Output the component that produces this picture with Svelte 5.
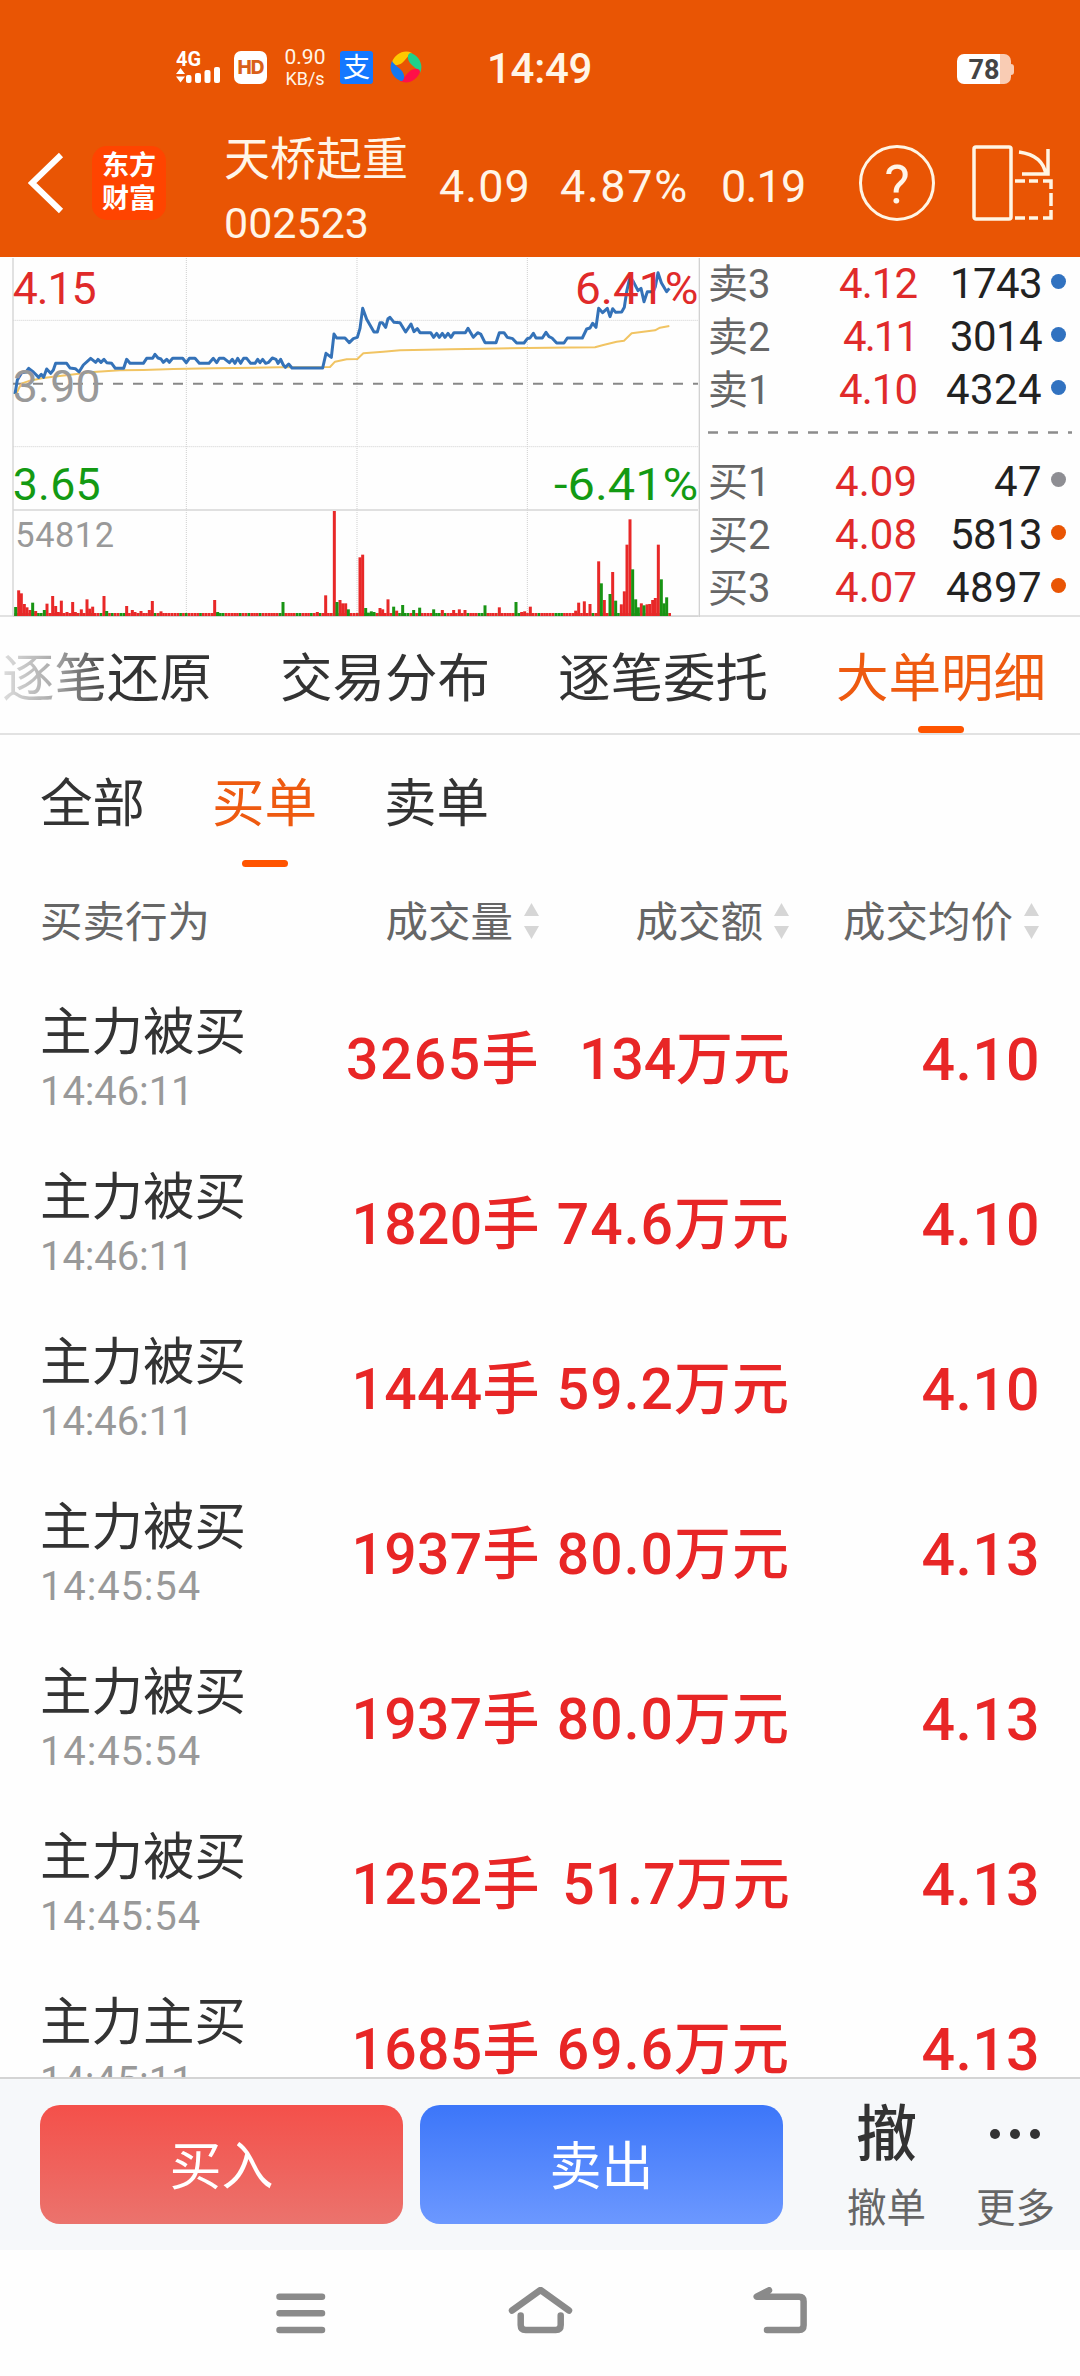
<script>
  // prices of the day, as chart points (three units to a pixel)
  const priceLine = '45,432 52,390 65,368 78,366 86,355 100,366 116,382 124,373 131,382 140,357 152,370 160,360 167,340 200,340 210,354 226,356 237,366 250,345 272,325 287,337 294,328 303,337 312,328 320,338 335,340 346,355 371,355 380,328 390,340 430,340 440,325 458,325 465,313 474,324 483,327 490,337 500,328 508,337 518,325 548,325 559,338 568,325 585,325 598,340 627,340 640,325 650,338 658,325 672,325 688,338 697,328 705,340 713,325 722,340 731,325 740,325 752,340 765,340 773,328 780,338 788,328 797,340 806,337 817,324 828,328 834,340 842,328 850,345 856,352 866,342 876,354 968,354 978,310 994,322 1002,252 1010,264 1035,264 1048,278 1060,266 1072,262 1080,235 1088,175 1100,208 1122,246 1132,246 1140,218 1147,218 1157,232 1164,206 1170,202 1182,217 1200,218 1217,246 1233,222 1242,245 1252,236 1260,248 1292,248 1301,262 1310,250 1318,262 1327,250 1335,262 1344,250 1353,262 1362,248 1396,248 1404,235 1420,262 1433,248 1442,252 1455,278 1488,278 1498,248 1512,248 1522,262 1538,266 1550,279 1572,279 1582,266 1590,264 1600,250 1608,264 1627,264 1638,247 1647,260 1656,264 1670,279 1692,279 1702,264 1747,264 1760,237 1770,234 1778,220 1788,232 1796,175 1808,188 1822,175 1830,200 1838,176 1847,187 1865,186 1873,172 1880,125 1890,80 1900,95 1914,122 1923,115 1932,155 1942,125 1960,125 1966,110 1974,68 1984,98 2000,125 2008,115';
  const averageLine = '50,430 58,412 66,400 90,392 125,385 160,380 230,372 280,366 360,361 430,360 520,357 640,355 840,352 990,351 1005,335 1040,328 1072,327 1090,310 1150,305 1200,301 1280,299 1350,298 1450,296 1580,294 1785,292 1810,285 1850,275 1872,272 1895,250 1930,245 1965,241 1980,233 2008,228';

  // x, height; buys are red, sells are green
  const buys = [
    [56, 77], [64, 68], [73, 36], [81, 26], [90, 18], [107, 15], [141, 37], [158, 60], [167, 30], [175, 12],
    [184, 46], [201, 12], [218, 42], [226, 12], [244, 20], [261, 50], [269, 22], [278, 28], [312, 60],
    [380, 30], [397, 18], [405, 12], [423, 15], [448, 18], [457, 45], [483, 14], [644, 48], [952, 12],
    [977, 62], [1003, 315], [1020, 48], [1028, 38], [1037, 38], [1080, 176], [1088, 184], [1140, 24],
    [1148, 20], [1164, 50], [1190, 16], [1327, 18], [1361, 18], [1378, 20], [1395, 18], [1498, 26],
    [1565, 12], [1574, 14], [1591, 28], [1727, 16], [1736, 40], [1753, 44], [1770, 36], [1796, 164],
    [1813, 48], [1838, 132], [1864, 35], [1873, 74], [1881, 214], [1890, 290], [1924, 38], [1941, 35],
    [1949, 36], [1958, 48], [1966, 54], [1975, 214]
  ];
  const sells = [
    [47, 27], [98, 40], [133, 18], [320, 15], [653, 12], [849, 42], [1011, 42], [1045, 20], [1097, 24],
    [1105, 10], [1114, 14], [1122, 12], [1181, 28], [1208, 33], [1241, 18], [1259, 25], [1301, 20],
    [1455, 32], [1548, 42], [1804, 98], [1830, 66], [1847, 46], [1898, 140], [1907, 50], [1915, 26],
    [1932, 32], [1984, 110], [1992, 38], [2000, 56]
  ];
  // quiet minutes still get a short bar
  const quiet = Array.from({ length: 231 }, (_, i) => ({
    x: 47 + i * 8.53,
    sell: i % 7 === 2 || i % 11 === 5 || i % 13 === 8
  }));

  const asks = [
    { label: '卖3', price: '4.12', volume: '1743', dot: 'blue' },
    { label: '卖2', price: '4.11', volume: '3014', dot: 'blue' },
    { label: '卖1', price: '4.10', volume: '4324', dot: 'blue' }
  ];
  const bids = [
    { label: '买1', price: '4.09', volume: '47', dot: 'gray' },
    { label: '买2', price: '4.08', volume: '5813', dot: 'orange' },
    { label: '买3', price: '4.07', volume: '4897', dot: 'orange' }
  ];

  const tabs = ['逐笔还原', '交易分布', '逐笔委托', '大单明细'];
  let activeTab = '大单明细';
  const filters = ['全部', '买单', '卖单'];
  let activeFilter = '买单';

  const orders = [
    { type: '主力被买', time: '14:46:11', volume: '3265手', amount: '134万元', price: '4.10' },
    { type: '主力被买', time: '14:46:11', volume: '1820手', amount: '74.6万元', price: '4.10' },
    { type: '主力被买', time: '14:46:11', volume: '1444手', amount: '59.2万元', price: '4.10' },
    { type: '主力被买', time: '14:45:54', volume: '1937手', amount: '80.0万元', price: '4.13' },
    { type: '主力被买', time: '14:45:54', volume: '1937手', amount: '80.0万元', price: '4.13' },
    { type: '主力被买', time: '14:45:54', volume: '1252手', amount: '51.7万元', price: '4.13' },
    { type: '主力主买', time: '14:45:11', volume: '1685手', amount: '69.6万元', price: '4.13' }
  ];

  // the digit 1 is narrow, so tighten texts by how many they have
  const tight = (text, extra = 0) => {
    const ones = text.split('1').length - 1;
    return `${(extra - 0.095 * ones / text.length).toFixed(4)}em`;
  };
</script>

<div class="screen">
  <div class="status">
    <svg class="signal" width="46" height="36" viewBox="0 -2 46 36">
      <text x="0" y="15" font-size="20" font-weight="700" textLength="25" lengthAdjust="spacingAndGlyphs">4G</text>
      <path d="M0 23l4.500-6 4.500 6zM0 25.500h9l-4.500 6z" />
      <rect x="10" y="24" width="5.500" height="8" rx="2" />
      <rect x="19" y="22" width="6" height="10" rx="2" />
      <rect x="28.500" y="19" width="6" height="13" rx="2" />
      <rect x="38" y="16" width="6" height="16" rx="2" />
    </svg>
    <div class="hd">HD</div>
    <div class="speed"><span>0.90</span><span>KB/s</span></div>
    <div class="alipay">支</div>
    <svg class="wheel" width="32" height="32" viewBox="0 0 32 32">
      {#each ['#ffc800', '#1fd08a', '#ff1048', '#1478f0'] as color, i}
        <path fill={color} transform="rotate({i * 90} 16 16)" d="M2 11C5 3 14-2 22 2C17 5 16 9 12 12C8 15 2 15 2 11z" />
      {/each}
    </svg>
    <div class="clock">14:49</div>
    <div class="battery"><span>78</span></div>
  </div>

  <header>
    <svg class="back" width="38" height="62" viewBox="0 0 38 62">
      <path d="M33 3L4 31l29 28" fill="none" stroke="#fff" stroke-width="6" />
    </svg>
    <div class="logo"><span>东方</span><span>财富</span></div>
    <div class="stock">
      <span class="name">天桥起重</span>
      <span class="code">002523</span>
    </div>
    <span class="quote now">4.09</span>
    <span class="quote percent">4.87%</span>
    <span class="quote change">0.19</span>
    <div class="help">?</div>
    <svg class="rotate" width="82" height="78" viewBox="0 0 82 78" fill="none" stroke="#fff5e4" stroke-width="3.500">
      <rect x="2" y="3" width="37" height="72" rx="2" />
      <path d="M47 8c15 2 25 9 27 23M76 5v25H50" />
      <path d="M43 37h10M57 37h9M71 37h8v8M79 49v13M79 66v8h-8M66 74h-9M53 74H43" />
    </svg>
  </header>

  <section class="market">
    <svg class="chart" width="700" height="360" viewBox="0 21 2100 1080">
      <g class="grid">
        <path d="M559 24V1098M1071 24V1098M1582 24V1098M40 211H2094M40 590H2094" />
      </g>
      <path d="M39 24V1098M2098 24V1101" stroke="#d2d2d2" stroke-width="4" />
      <path d="M39 780H2094M39 1099H2094" stroke="#d6d6d6" stroke-width="5" />
      <path d="M39 401H2094" stroke="#888" stroke-width="6" stroke-dasharray="30 30" />
      {#each quiet as bar}
        <rect class:sell={bar.sell} class="bar" x={bar.x - 4} y="1089" width="8" height="9" />
      {/each}
      {#each buys as [x, height]}
        <rect class="bar" x={x - 4.500} y={1098 - height} width="9" {height} />
      {/each}
      {#each sells as [x, height]}
        <rect class="bar sell" x={x - 4.500} y={1098 - height} width="9" {height} />
      {/each}
      <polyline points={averageLine} stroke="#f1c463" stroke-width="6" />
      <polyline points={priceLine} stroke="#3472b8" stroke-width="9" />
      <g class="labels">
        <text x="38" y="161" fill="#e02a2a" textLength="252">4.15</text>
        <text x="38" y="456" fill="#999" textLength="264">3.90</text>
        <text x="38" y="749" fill="#139a13" textLength="264">3.65</text>
        <text x="46" y="891" fill="#999" font-size="103" textLength="296">54812</text>
        <text x="1725" y="161" fill="#e02a2a" textLength="370" lengthAdjust="spacingAndGlyphs">6.41%</text>
        <text x="1662" y="749" fill="#139a13" textLength="433" lengthAdjust="spacingAndGlyphs">-6.41%</text>
      </g>
    </svg>
    <div class="book">
      {#each asks as row}
        <div class="level">
          <span class="side">{row.label}</span>
          <span class="price" style:letter-spacing={tight(row.price)}>{row.price}</span>
          <span class="volume" style:letter-spacing={tight(row.volume, 0.01)}>{row.volume}</span>
          <i class="dot {row.dot}"></i>
        </div>
      {/each}
      <svg class="split" width="366" height="3" viewBox="0 0 366 3">
        <path d="M0 1.500H364" stroke="#8c8c8c" stroke-width="2.500" stroke-dasharray="10 10" />
      </svg>
      {#each bids as row}
        <div class="level">
          <span class="side">{row.label}</span>
          <span class="price" style:letter-spacing={tight(row.price)}>{row.price}</span>
          <span class="volume" style:letter-spacing={tight(row.volume, 0.01)}>{row.volume}</span>
          <i class="dot {row.dot}"></i>
        </div>
      {/each}
    </div>
  </section>

  <nav class="tabs">
    {#each tabs as tab, i}
      <button class:active={tab === activeTab} class:faded={i === 0} on:click={() => (activeTab = tab)}>{tab}</button>
    {/each}
  </nav>

  <nav class="filters">
    {#each filters as filter}
      <button class:active={filter === activeFilter} on:click={() => (activeFilter = filter)}>{filter}</button>
    {/each}
  </nav>

  <div class="columns">
    <span class="col-type">买卖行为</span>
    {#each ['成交量', '成交额', '成交均价'] as column}
      <span class="col">
        <span>{column}</span>
        <svg width="15" height="36" viewBox="0 0 15 36" fill="#d6d6d6">
          <path d="M7.500 0L15 13H0zM7.500 36L15 23H0z" />
        </svg>
      </span>
    {/each}
  </div>

  <main>
    {#each orders as order}
      <div class="order">
        <div class="kind">
          <span class="type">{order.type}</span>
          <span class="time" style:letter-spacing={tight(order.time, 0.033)}>{order.time}</span>
        </div>
        <span class="value" style:letter-spacing={tight(order.volume, 0.026)}>{order.volume}</span>
        <span class="value" style:letter-spacing={tight(order.amount, 0.018)}>{order.amount}</span>
        <span class="value average" style:letter-spacing={tight(order.price, 0.03)}>{order.price}</span>
      </div>
    {/each}
  </main>

  <footer>
    <button class="trade buy">买入</button>
    <button class="trade sell-out">卖出</button>
    <div class="action cancel">
      <span class="glyph">撤</span>
      <span>撤单</span>
    </div>
    <div class="action more">
      <svg width="61" height="61" viewBox="0 0 61 61" fill="#333">
        <circle cx="10" cy="29" r="5" />
        <circle cx="30" cy="29" r="5" />
        <circle cx="50" cy="29" r="5" />
      </svg>
      <span>更多</span>
    </div>
  </footer>

  <div class="system">
    <svg width="50" height="52" viewBox="0 0 50 52"><path d="M3.500 9.700h42.500M3.500 26.300h42.500M3.500 43h42.500" /></svg>
    <svg width="66" height="52" viewBox="0 0 66 52"><path d="M4 23.500L32.500 3 61 23.500M12.700 28.500v9.500q0 5 5 5h30q5 0 5-5v-9.500" /></svg>
    <svg class="return" width="56" height="52" viewBox="-4 0 56 52"><path d="M13 3.300L.7 9.700H43q4.600 0 4.600 4.600v24q0 4.700-4.600 4.700H11" /></svg>
  </div>
</div>

<style>
  :global(body) {
    margin: 0;
    background: #fefefe;
  }

  .screen {
    width: 1080px;
    height: 2376px;
    display: flex;
    flex-direction: column;
    overflow: hidden;
    background: #fefefe;
    font-family: Roboto, "Noto Sans CJK SC", sans-serif;
    color: #333;
    line-height: 1;
  }

  button {
    border: none;
    background: none;
    padding: 0;
    font: inherit;
    color: inherit;
  }

  .status {
    height: 109px;
    box-sizing: border-box;
    padding: 25px 66px 0 176px;
    display: flex;
    align-items: center;
    background: #e95504;
    color: #fff5e8;
  }

  .signal {
    fill: #fff;
  }

  .hd {
    width: 33px;
    height: 33px;
    margin-left: 12px;
    border-radius: 7px;
    background: #fff;
    color: #d9601a;
    font-family: Inter, sans-serif;
    font-size: 19px;
    font-weight: 800;
    line-height: 33px;
    text-align: center;
    letter-spacing: -1px;
  }

  .speed {
    width: 42px;
    margin-left: 17px;
    display: flex;
    flex-direction: column;
    align-items: center;
    gap: 2px;
    font-size: 21px;
  }

  .speed span + span {
    font-size: 18px;
  }

  .alipay {
    width: 33px;
    height: 33px;
    margin-left: 14px;
    border-radius: 3px;
    background: #1478ff;
    color: #fff;
    font-size: 27px;
    line-height: 34px;
    text-align: center;
  }

  .wheel {
    margin-left: 17px;
  }

  .clock {
    margin-left: 65px;
    padding-top: 4px;
    font-size: 42px;
    font-weight: 500;
    letter-spacing: -0.3px;
  }

  .battery {
    position: relative;
    width: 54px;
    height: 30px;
    margin-left: auto;
    margin-right: 3px;
    margin-top: 3px;
    border-radius: 7px;
    background: linear-gradient(90deg, #fff 80%, #f9ccb4 80%);
    color: #444;
    font-size: 27px;
    font-weight: 700;
    line-height: 32px;
    text-align: center;
  }

  .battery::after {
    content: "";
    position: absolute;
    right: -3px;
    top: 10px;
    width: 3px;
    height: 11px;
    border-radius: 0 3px 3px 0;
    background: #f9ccb4;
  }

  header {
    height: 148px;
    display: flex;
    align-items: center;
    background: #e95504;
    color: #fff5e8;
  }

  .back {
    margin-left: 28px;
  }

  .logo {
    width: 74px;
    height: 74px;
    margin-left: 26px;
    border-radius: 15px;
    display: flex;
    flex-direction: column;
    align-items: center;
    justify-content: center;
    gap: 6px;
    background: #ff4400;
    color: #fff;
    font-size: 27px;
    font-weight: 700;
  }

  .stock {
    width: 215px;
    margin-left: 58px;
    padding-top: 15px;
    display: flex;
    flex-direction: column;
    gap: 20px;
  }

  .name {
    font-size: 46px;
  }

  .code {
    font-size: 43px;
  }

  .quote {
    font-size: 45px;
    padding-top: 6px;
    white-space: nowrap;
  }

  .now {
    width: 121px;
    letter-spacing: 1px;
  }

  .percent {
    width: 161px;
    letter-spacing: 1.600px;
  }

  .change {
    width: 138px;
    letter-spacing: -0.8px;
  }

  .help {
    width: 70px;
    height: 70px;
    border: 3.500px solid #fff5e4;
    border-radius: 50%;
    font-size: 54px;
    line-height: 74px;
    text-align: center;
  }

  .rotate {
    margin-left: 37px;
  }

  .market {
    height: 360px;
    display: flex;
    border-bottom: 2px solid #e2e2e2;
    box-sizing: border-box;
  }

  .chart {
    flex: none;
    font-size: 134px;
  }

  .grid path {
    fill: none;
    stroke: #cfcfcf;
    stroke-width: 3;
    stroke-dasharray: 3 3;
  }

  polyline {
    fill: none;
    stroke-linejoin: round;
  }

  .bar {
    fill: #e82828;
  }

  .bar.sell {
    fill: #189414;
  }

  .book {
    flex: 1;
    padding: 0 15px 0 8px;
  }

  .level {
    height: 53px;
    display: flex;
    align-items: center;
    font-size: 42px;
  }

  .side {
    width: 78px;
    padding-top: 2px;
    color: #666;
    font-size: 40px;
    white-space: nowrap;
  }

  .price {
    width: 131px;
    color: #e02a2a;
    text-align: right;
  }

  .volume {
    width: 125px;
    color: #222;
    text-align: right;
  }

  .dot {
    width: 15px;
    height: 15px;
    margin-left: 9px;
    margin-bottom: 5px;
    border-radius: 50%;
  }

  .blue {
    background: #3172c0;
  }

  .gray {
    background: #8e8e93;
  }

  .orange {
    background: #e95504;
  }

  .split {
    display: block;
    margin: 15px 0 21px;
  }

  .tabs {
    height: 118px;
    box-sizing: border-box;
    padding-left: 2px;
    display: flex;
    gap: 68px;
    border-bottom: 2px solid #e2e2e2;
    font-size: 52.500px;
  }

  .tabs button,
  .filters button {
    position: relative;
    flex: none;
  }

  .tabs button {
    padding-top: 9px;
  }

  .filters button {
    padding-top: 7px;
  }

  .tabs .active,
  .filters .active {
    color: #ee5a10;
  }

  .tabs .active::after,
  .filters .active::after {
    content: "";
    position: absolute;
    left: 50%;
    bottom: 0;
    width: 46px;
    height: 7px;
    margin-left: -23px;
    border-radius: 3.500px;
    background: #ff5400;
  }

  .faded {
    background: linear-gradient(90deg, #ddd, #aaa 25%, #333 52%) !important;
    background-clip: text !important;
    color: transparent;
  }

  .filters {
    height: 132px;
    padding-left: 40px;
    display: flex;
    gap: 67px;
    font-size: 52.500px;
  }

  .columns {
    height: 108px;
    padding-left: 40px;
    display: flex;
    align-items: center;
    color: #666;
    font-size: 42.500px;
  }

  .col-type {
    width: 249px;
    padding-top: 5px;
  }

  .col {
    width: 250px;
    display: flex;
    align-items: center;
    justify-content: flex-end;
    gap: 11px;
  }

  .col span {
    padding-top: 5px;
  }

  main {
    flex: 1;
    overflow: hidden;
    padding-left: 40px;
  }

  .order {
    height: 165px;
    display: flex;
    align-items: center;
  }

  .kind {
    width: 250px;
    padding-top: 4px;
    display: flex;
    flex-direction: column;
    gap: 14px;
  }

  .type {
    font-size: 51.500px;
  }

  .time {
    color: #999;
    font-size: 40px;
  }

  .value {
    width: 250px;
    padding-top: 3px;
    color: #e82626;
    font-size: 57px;
    font-weight: 500;
    text-align: right;
    white-space: nowrap;
  }

  .average {
    font-size: 59px;
  }

  footer {
    height: 173px;
    box-sizing: border-box;
    border-top: 2px solid #d4d4d4;
    padding-left: 40px;
    display: flex;
    align-items: center;
    background: #f6f8fa;
  }

  .trade {
    width: 363px;
    height: 119px;
    margin-right: 17px;
    padding-top: 6px;
    border-radius: 20px;
    color: #fff;
    font-size: 52px;
  }

  .buy {
    background: linear-gradient(#f4504a, #eb736d);
  }

  .sell-out {
    background: linear-gradient(#3c76f9, #6c98ff);
  }

  .action {
    padding-top: 5px;
    display: flex;
    flex-direction: column;
    align-items: center;
    gap: 23px;
    color: #666;
    font-size: 39.500px;
  }

  .cancel {
    margin-left: 47px;
  }

  .more {
    margin-left: 50px;
  }

  .glyph {
    color: #333;
    font-size: 61px;
    font-weight: 500;
  }

  .system {
    height: 126px;
    display: flex;
    align-items: center;
    padding-left: 276px;
    gap: 182px;
  }

  .system path {
    fill: none;
    stroke: #8a8a8a;
    stroke-width: 6.500;
    stroke-linecap: round;
    stroke-linejoin: round;
  }

  .return {
    margin-left: -4px;
  }
</style>
